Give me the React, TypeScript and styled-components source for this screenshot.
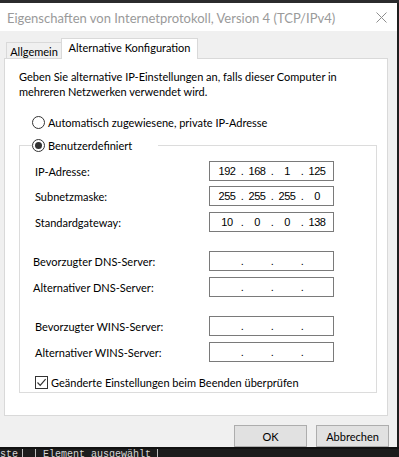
import React from "react";
import styled, { createGlobalStyle } from "styled-components";

const GlobalStyle = createGlobalStyle`
  html, body { margin: 0; padding: 0; background: #1e1e1e; }
  body { font-family: Lato, "Noto Sans", sans-serif; font-size: 11px; color: #000; }
  * { box-sizing: border-box; }
`;

const Screen = styled.div`
  width: 399px;
  height: 457px;
  display: flex;
  flex-direction: column;
  overflow: hidden;
  background: #1e1e1e;
`;

const TopStrip = styled.div`
  height: 3px;
  background: #2b2b2d;
`;

const Middle = styled.div`
  display: flex;
  height: 444px;
`;

const Dialog = styled.div`
  width: 397px;
  display: flex;
  flex-direction: column;
  background: #f0f0f0;
`;

const RightEdge = styled.div`
  flex: 1;
  background: #1e1e1e;
`;

const TitleBar = styled.div`
  height: 28px;
  background: #fff;
  display: flex;
  align-items: center;
  justify-content: space-between;
  padding: 0 10px 0 7px;
`;

const Title = styled.div`
  font-size: 13px;
  color: #9a9a9a;
  white-space: nowrap;
  padding-top: 1px;
`;

const TabStrip = styled.div`
  height: 27px;
  display: flex;
  align-items: flex-end;
  padding-left: 6px;
`;

const Tab = styled.div<{ $active?: boolean }>`
  position: relative;
  z-index: 1;
  display: flex;
  align-items: center;
  justify-content: center;
  white-space: nowrap;
  background: ${(p) => (p.$active ? "#fff" : "#f0f0f0")};
  border: 1px solid #d9d9d9;
  border-bottom: none;
  border-right: ${(p) => (p.$active ? "1px solid #d9d9d9" : "none")};
  width: ${(p) => (p.$active ? "137px" : "55px")};
  height: ${(p) => (p.$active ? "21px" : "16px")};
  margin-bottom: ${(p) => (p.$active ? "-1px" : "0")};
  padding-bottom: ${(p) => (p.$active ? "3px" : "0")};
  padding-top: ${(p) => (p.$active ? "0" : "1px")};
`;

const TabPanel = styled.div`
  margin-left: 4px;
  width: 384px;
  height: 358px;
  background: #fff;
  border: 1px solid #d9d9d9;
  display: flex;
  flex-direction: column;
`;

const Description = styled.p`
  margin: 10px 0 0 14px;
  line-height: 15px;
  width: 340px;
`;

const RadioRow = styled.label`
  display: flex;
  align-items: center;
  gap: 3px;
  height: 16px;
  white-space: nowrap;
`;

const FirstRadio = styled(RadioRow)`
  margin: 15px 0 0 27px;
`;

const RadioCircle = styled.span<{ $checked?: boolean }>`
  width: 13px;
  height: 13px;
  border-radius: 50%;
  border: 1px solid #333;
  background: #fff;
  display: flex;
  align-items: center;
  justify-content: center;
  flex: none;
  &::after {
    content: "";
    display: ${(p) => (p.$checked ? "block" : "none")};
    width: 7px;
    height: 7px;
    border-radius: 50%;
    background: #333;
  }
`;

const Group = styled.fieldset`
  margin: 7px 0 0 14px;
  width: 358px;
  height: 256px;
  padding: 0;
  border: 1px solid #dcdcdc;
  display: flex;
  flex-direction: column;
  min-width: 0;
`;

const Legend = styled.legend`
  margin-left: 12px;
  padding: 0;
  width: 126px;
`;

const Rows = styled.div`
  display: flex;
  flex-direction: column;
  padding: 8px 0 0 15px;
`;

const FieldRow = styled.div<{ $mt: number; $shift?: number }>`
  display: grid;
  grid-template-columns: 174px 125px;
  align-items: center;
  height: 20px;
  margin-top: ${(p) => p.$mt}px;
  & > span:first-child {
    margin-left: ${(p) => p.$shift ?? 0}px;
  }
`;

const Label = styled.span`
  white-space: nowrap;
`;

const IpBox = styled.div`
  height: 20px;
  border: 1px solid #7a7a7a;
  background: #fff;
  display: flex;
  align-items: center;
  padding: 0 0 1px 5px;
  font-family: "Liberation Sans", Arial, sans-serif;
  font-size: 11px;
  letter-spacing: -0.4px;
`;

const Octet = styled.span`
  width: 24px;
  text-align: center;
`;

const Dot = styled.span`
  width: 6px;
  text-align: center;
`;

const CheckRow = styled.label`
  display: flex;
  align-items: center;
  gap: 3px;
  margin: 13px 0 0 0;
  height: 14px;
  white-space: nowrap;
`;

const CheckBox = styled.span`
  width: 13px;
  height: 13px;
  border: 1px solid #333;
  background: #fff;
  display: flex;
  align-items: center;
  justify-content: center;
  flex: none;
`;

const ButtonRow = styled.div`
  display: flex;
  justify-content: flex-end;
  gap: 9px;
  margin-top: 9px;
  padding-right: 8px;
`;

const Button = styled.button`
  width: 73px;
  height: 22px;
  background: #e1e1e1;
  border: 1px solid #adadad;
  font-family: Lato, "Noto Sans", sans-serif;
  font-size: 11px;
  color: #000;
  padding: 0;
`;

const BottomStrip = styled.div`
  height: 10px;
  display: flex;
  background: #1c1c1c;
  border-top: 2px solid #111;
  overflow: hidden;
  font-family: "Liberation Mono", monospace;
  font-size: 10px;
  color: #d6d6d6;
  line-height: 12px;
`;

const StatusCell = styled.div<{ $w: number; $pl?: number }>`
  width: ${(p) => p.$w}px;
  padding-left: ${(p) => p.$pl ?? 0}px;
  border-right: 1px solid #bdbdbd;
  white-space: nowrap;
  overflow: hidden;
`;

function Ip({ parts }: { parts: string[] }) {
  return (
    <IpBox>
      {parts.map((p, i) => (
        <React.Fragment key={i}>
          <Octet>{p}</Octet>
          {i < 3 && <Dot>.</Dot>}
        </React.Fragment>
      ))}
    </IpBox>
  );
}

const empty = ["", "", "", ""];

export default function App() {
  return (
    <Screen>
      <GlobalStyle />
      <TopStrip />
      <Middle>
        <Dialog>
          <TitleBar>
            <Title>Eigenschaften von Internetprotokoll, Version 4 (TCP/IPv4)</Title>
            <svg width="11" height="11" viewBox="0 0 11 11">
              <path d="M0.5 0.5 L10.5 10.5 M10.5 0.5 L0.5 10.5" stroke="#8e8e8e" strokeWidth="1" fill="none" />
            </svg>
          </TitleBar>
          <TabStrip>
            <Tab>Allgemein</Tab>
            <Tab $active>Alternative Konfiguration</Tab>
          </TabStrip>
          <TabPanel>
            <Description>
              Geben Sie alternative IP-Einstellungen an, falls dieser Computer in mehreren Netzwerken verwendet wird.
            </Description>
            <FirstRadio>
              <RadioCircle />
              Automatisch zugewiesene, private IP-Adresse
            </FirstRadio>
            <Group>
              <Legend>
                <RadioRow>
                  <RadioCircle $checked />
                  Benutzerdefiniert
                </RadioRow>
              </Legend>
              <Rows>
                <FieldRow $mt={0}>
                  <Label>IP-Adresse:</Label>
                  <Ip parts={["192", "168", "1", "125"]} />
                </FieldRow>
                <FieldRow $mt={5}>
                  <Label>Subnetzmaske:</Label>
                  <Ip parts={["255", "255", "255", "0"]} />
                </FieldRow>
                <FieldRow $mt={6}>
                  <Label>Standardgateway:</Label>
                  <Ip parts={["10", "0", "0", "138"]} />
                </FieldRow>
                <FieldRow $mt={19} $shift={-2}>
                  <Label>Bevorzugter DNS-Server:</Label>
                  <Ip parts={empty} />
                </FieldRow>
                <FieldRow $mt={6} $shift={-2}>
                  <Label>Alternativer DNS-Server:</Label>
                  <Ip parts={empty} />
                </FieldRow>
                <FieldRow $mt={19}>
                  <Label>Bevorzugter WINS-Server:</Label>
                  <Ip parts={empty} />
                </FieldRow>
                <FieldRow $mt={6}>
                  <Label>Alternativer WINS-Server:</Label>
                  <Ip parts={empty} />
                </FieldRow>
                <CheckRow>
                  <CheckBox>
                    <svg width="11" height="11" viewBox="0 0 11 11">
                      <path d="M1.5 5.5 L4.2 8.3 L9.6 2.2" stroke="#333" strokeWidth="1.2" fill="none" />
                    </svg>
                  </CheckBox>
                  Geänderte Einstellungen beim Beenden überprüfen
                </CheckRow>
              </Rows>
            </Group>
          </TabPanel>
          <ButtonRow>
            <Button>OK</Button>
            <Button>Abbrechen</Button>
          </ButtonRow>
        </Dialog>
        <RightEdge />
      </Middle>
      <BottomStrip>
        <StatusCell $w={23}>ste</StatusCell>
        <StatusCell $w={13} />
        <StatusCell $w={122} $pl={7}>Element ausgewählt</StatusCell>
      </BottomStrip>
    </Screen>
  );
}
